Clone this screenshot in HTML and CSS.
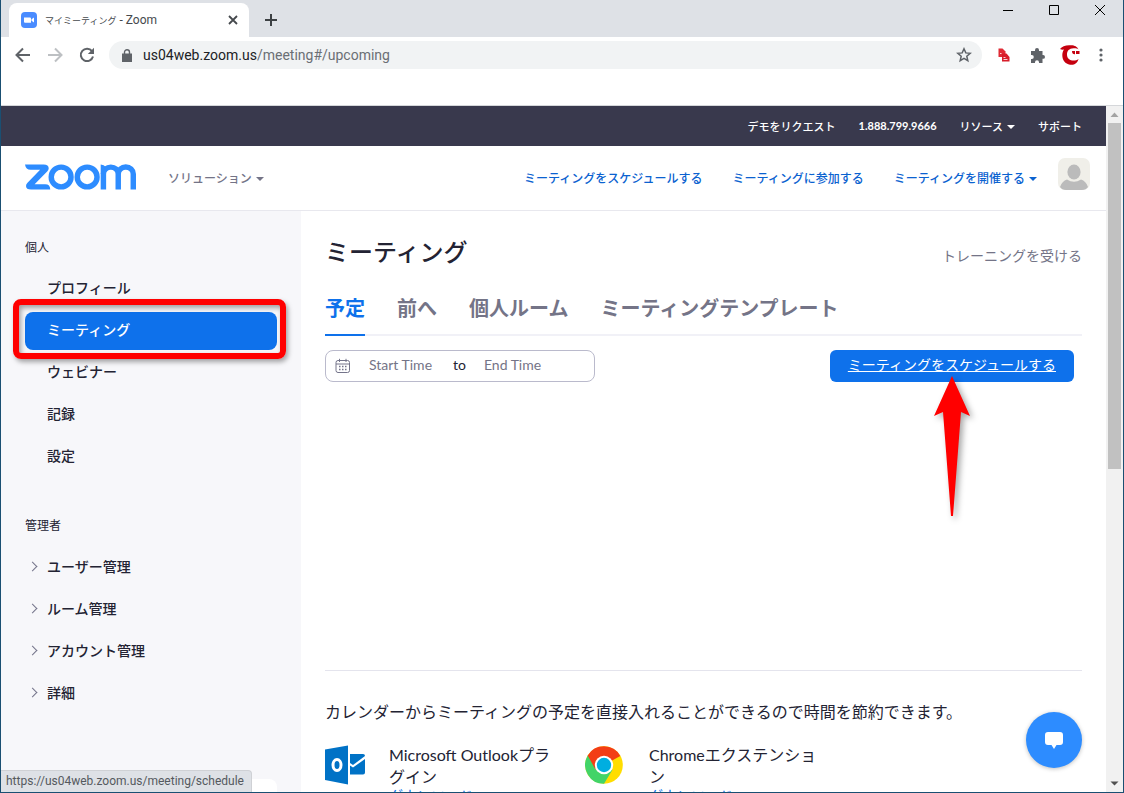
FILE: index.html
```html
<!DOCTYPE html>
<html lang="ja">
<head>
<meta charset="utf-8">
<title>マイミーティング - Zoom</title>
<link rel="stylesheet" href="styles.css">
</head>
<body>
<div class="window">
  <div class="tabstrip">
    <div class="tab">
      <svg class="favicon" viewBox="0 0 16 16"><rect width="16" height="16" rx="4" fill="#4a8cff"/><path d="M3 5.500h6q1 0 1 1v4.300H4q-1 0-1-1zM10.500 7.300 13 5.500v5l-2.500-1.800z" fill="#fff"/></svg>
      <span class="tab-title"><span class="tab-ja">マイミーティング</span> - Zoom</span>
      <button class="icon-btn" aria-label="タブを閉じる"><svg width="10" height="10" viewBox="0 0 10 10"><path d="M1 1l8 8M9 1L1 9" stroke="#45494d" stroke-width="1.800"/></svg></button>
    </div>
    <button class="icon-btn new-tab" aria-label="新しいタブ"><svg width="12" height="12" viewBox="0 0 12 12"><path d="M6 0v12M0 6h12" stroke="#3c4043" stroke-width="2"/></svg></button>
    <div class="window-controls">
      <button class="icon-btn" aria-label="最小化"><svg width="10" height="10" viewBox="0 0 10 10"><path d="M0 5.500h10" stroke="#000"/></svg></button>
      <button class="icon-btn" aria-label="最大化"><svg width="10" height="10" viewBox="0 0 10 10"><path d="M.5.5h9v9h-9z" fill="none" stroke="#000"/></svg></button>
      <button class="icon-btn" aria-label="閉じる"><svg width="10" height="10" viewBox="0 0 10 10"><path d="M0 0l10 10M10 0L0 10" stroke="#000"/></svg></button>
    </div>
  </div>
  <div class="toolbar">
    <button class="icon-btn" aria-label="戻る"><svg width="16" height="16" viewBox="0 0 16 16"><path d="M15 8H2M8 1.500 1.500 8 8 14.500" fill="none" stroke="#5f6368" stroke-width="2"/></svg></button>
    <button class="icon-btn" aria-label="進む"><svg width="16" height="16" viewBox="0 0 16 16"><path d="M1 8h13M8 1.500 14.500 8 8 14.500" fill="none" stroke="#bdc0c3" stroke-width="2"/></svg></button>
    <button class="icon-btn" aria-label="再読み込み"><svg width="16" height="16" viewBox="0 0 16 16"><path d="M13 4.200A6.200 6.200 0 1 0 14 9.500" fill="none" stroke="#5f6368" stroke-width="2"/><path d="M15 .8v6.200H8.800z" fill="#5f6368"/></svg></button>
    <div class="address">
      <svg width="10" height="13" viewBox="0 0 10 13"><path d="M0 4.500h10V13H0z" fill="#5f6368"/><path d="M2.500 5V3.200a2.500 2.500 0 0 1 5 0V5" fill="none" stroke="#5f6368" stroke-width="1.400"/></svg>
      <span class="url">us04web.zoom.us<span class="url-path">/meeting#/upcoming</span></span>
      <button class="icon-btn" aria-label="ブックマーク"><svg width="16" height="16" viewBox="0 0 16 16"><path d="M8 1.800l1.800 4.100 4.400.4-3.400 2.900 1 4.400L8 11.300l-3.800 2.300 1-4.400-3.400-2.900 4.400-.4z" fill="none" stroke="#5f6368" stroke-width="1.500"/></svg></button>
    </div>
    <div class="extensions">
      <button class="icon-btn" aria-label="コピー"><svg width="12" height="14" viewBox="0 0 12 14"><path d="M.5.5h4l3 3V9h-7z" fill="#e02b35"/><path d="M4 5.500h4.500L11.500 9v4.500H4z" fill="#d81e2b"/><path d="M2 5.500h1.500M5.500 9.500h2M5.500 11.500h4" stroke="#fff" stroke-width=".8"/></svg></button>
      <button class="icon-btn" aria-label="拡張機能"><svg width="15" height="15" viewBox="0 0 15 15"><path d="M1 3h4V2a2 2 0 0 1 4 0v1h3.500v4h.6a1.900 1.900 0 0 1 0 3.800h-.6V15H9v-.8a2 2 0 0 0-4 0v.8H1v-4h.8a2 2 0 0 0 0-4H1z" fill="#5f6368"/></svg></button>
      <button class="icon-btn" aria-label="プロフィール"><svg width="20" height="20" viewBox="0 0 20 20"><path d="M0 4C2 1 6-.2 11 .2c4 .2 6 1.200 7.500 4.300-1.500-1.200-3-1.300-5-1.200C9 3.500 7 6 7 9.500c0 4 3 6 6.500 6 2 0 3.500-.5 5-1.500-1 4-4.500 6.500-8.500 5.700C4.500 18.700 1.500 14 2.500 8c.3-1.500.8-2.500 1.500-3.500Q2 5 0 4z" fill="#c5000f"/><path d="M12 6h3v3.200c-1.800.2-3-.6-3-3.200zM16 6h3.500v3H16z" fill="#c5000f"/></svg></button>
      <button class="icon-btn menu-btn" aria-label="メニュー"><svg width="4" height="14" viewBox="0 0 4 14" fill="#5f6368"><circle cx="2" cy="2" r="1.600"/><circle cx="2" cy="7" r="1.600"/><circle cx="2" cy="12" r="1.600"/></svg></button>
    </div>
  </div>

  <div class="viewport">
    <div class="page">
      <nav class="topbar">
        <a href="#">デモをリクエスト</a>
        <a class="phone" href="#">1.888.799.9666</a>
        <a class="has-caret" href="#">リソース</a>
        <a href="#">サポート</a>
      </nav>
      <header class="header">
        <a class="logo" href="#" aria-label="zoom">
          <svg width="111" height="26" viewBox="0 0 110 25"><path d="M0 0h18.500q5 0 5 3.800 0 1.700-1.300 3L9.500 19.800H20q5 0 5 5.200H6q-5 0-5-3.500 0-1.900 1.500-3.300L15 5.300H5.500Q.8 5.300 0 0z" fill="#2d8cff"/><g fill="none" stroke="#2d8cff" stroke-width="5.400"><circle cx="35.800" cy="12.500" r="9.800"/><circle cx="61.600" cy="12.500" r="9.800"/><path d="M77.700 25V9.500a7.350 6.800 0 0 1 14.700 0V25M92.400 9.500a7.350 6.800 0 0 1 14.900 0V25"/></g><path d="M75 0q3.500 0 5 2.500l-3 7h-2z" fill="#2d8cff"/></svg>
        </a>
        <a class="solutions has-caret" href="#">ソリューション</a>
        <nav class="header-links">
          <a href="#">ミーティングをスケジュールする</a>
          <a href="#">ミーティングに参加する</a>
          <a class="has-caret" href="#">ミーティングを開催する</a>
        </nav>
        <svg class="avatar" viewBox="0 0 32 32"><rect width="32" height="32" rx="7" fill="#f0efe9"/><ellipse cx="16" cy="14" rx="6.600" ry="7.500" fill="#bbb"/><path d="M2 29q2-6 7-7.500 7 4.500 14 0 5 1.500 7 7.500-2 3-6 3H8q-4 0-6-3z" fill="#bbb"/></svg>
      </header>
      <div class="body">
        <aside class="sidebar">
          <h2 class="side-label">個人</h2>
          <ul class="side-list">
            <li><a href="#">プロフィール</a></li>
            <li class="highlighted"><a class="active" href="#">ミーティング</a></li>
            <li><a href="#">ウェビナー</a></li>
            <li><a href="#">記録</a></li>
            <li><a href="#">設定</a></li>
          </ul>
          <h2 class="side-label">管理者</h2>
          <ul class="side-list expandable">
            <li><a href="#">ユーザー管理</a></li>
            <li><a href="#">ルーム管理</a></li>
            <li><a href="#">アカウント管理</a></li>
            <li><a href="#">詳細</a></li>
          </ul>
          <div class="side-card"></div>
        </aside>
        <main class="main">
          <div class="title-row">
            <h1>ミーティング</h1>
            <a class="training" href="#">トレーニングを受ける</a>
          </div>
          <nav class="tabs">
            <a class="current" href="#">予定</a>
            <a href="#">前へ</a>
            <a href="#">個人ルーム</a>
            <a href="#">ミーティングテンプレート</a>
          </nav>
          <div class="actions">
            <div class="range">
              <svg width="16" height="16" viewBox="0 0 16 16"><g fill="none" stroke="#74748a"><rect x="1" y="2.500" width="13.500" height="12" rx="2"/><path d="M1 6h13.500M4.500.8V4M11 .8V4"/></g><path d="M4 8.500h1.500M7 8.500h1.500M10 8.500h1.500M4 11.500h1.500M7 11.500h1.500M10 11.500h1.500" stroke="#74748a" stroke-width="1.500"/></svg>
              <input type="text" placeholder="Start Time" aria-label="Start Time">
              <span>to</span>
              <input type="text" placeholder="End Time" aria-label="End Time">
            </div>
            <a class="schedule" href="#">ミーティングをスケジュールする
              <svg class="pointer" width="38" height="142" viewBox="0 0 38 142"><path d="M19 1 37 41l-9-4-8 104h-2L10 37l-9 4z" fill="#f00"/></svg>
            </a>
          </div>
          <section class="plugins">
            <p class="lead">カレンダーからミーティングの予定を直接入れることができるので時間を節約できます。</p>
            <div class="plugin-list">
              <div class="plugin">
                <svg class="plugin-icon" viewBox="0 0 40 40"><path d="M0 4.500 23 .5v39L0 35z" fill="#0072c6"/><path d="M25 9h13q2 0 2 2l-12 9-3-2z" fill="#0072c6"/><path d="M25 20.500l3 2 12-8.500v13.500q0 2-2 2H25z" fill="#0072c6"/><ellipse cx="12" cy="20" rx="4" ry="5.500" fill="none" stroke="#fff" stroke-width="3"/></svg>
                <div class="plugin-text">Microsoft Outlookプラグイン<a href="#">ダウンロード</a></div>
              </div>
              <div class="plugin">
                <svg class="plugin-icon" viewBox="0 0 40 40"><circle cx="19" cy="20" r="18.800" fill="#ffdd00"/><path d="M19 20 2.700 10.600A18.800 18.800 0 0 0 19 38.800l8.500-14z" fill="#42d468"/><path d="M19 20 10.500 24.500 2.700 10.600A18.800 18.800 0 0 1 35.300 11z" fill="#f33d16"/><circle cx="19" cy="20" r="9.200" fill="#fff"/><circle cx="19" cy="20" r="7.200" fill="#00aee0"/></svg>
                <div class="plugin-text">Chromeエクステンション<a href="#">ダウンロード</a></div>
              </div>
            </div>
          </section>
        </main>
      </div>
      <button class="chat" aria-label="チャット"><svg width="20" height="20" viewBox="0 0 20 20"><path d="M4 2h12q3 0 3 3v7q0 3-3 3h-3.500L10 19l-2.500-4H4q-3 0-3-3V5q0-3 3-3z" fill="#fff"/></svg></button>
      <div class="status">https://us04web.zoom.us/meeting/schedule</div>
    </div>
    <div class="scrollbar">
      <svg viewBox="0 0 17 17"><path d="M4.500 11h8l-4-4.500z" fill="#a3a3a3"/></svg>
      <div class="track"><div class="thumb"></div></div>
      <svg viewBox="0 0 17 17"><path d="M4.500 6.500h8l-4 4z" fill="#505050"/></svg>
    </div>
  </div>
</div>
</body>
</html>
```
FILE: styles.css
```css
* { box-sizing: border-box; }
body {
  margin: 0;
  font-family: Lato, "Noto Sans CJK JP", sans-serif;
  color: #232333;
}
a { color: inherit; text-decoration: none; }
svg { display: block; flex: none; }
ul { list-style: none; margin: 0; padding: 0; }
h1, h2, p { margin: 0; }

.window {
  display: flex;
  flex-direction: column;
  height: 100vh;
  overflow: hidden;
  background: #fff;
  border: 1px solid #1a4f72;
  border-top: 0;
}
.icon-btn {
  display: flex;
  align-items: center;
  justify-content: center;
  padding: 0;
  border: 0;
  background: none;
}

/* browser frame */
.tabstrip {
  display: flex;
  flex: none;
  height: 37px;
  padding-left: 8px;
  background: #dee1e6;
  font: 12px Roboto, "Noto Sans CJK JP", sans-serif;
}
.tab {
  display: flex;
  align-items: center;
  width: 240px;
  height: 34px;
  margin-top: 3px;
  padding: 0 11px 0 12px;
  border-radius: 8px 8px 0 0;
  background: #fff;
  box-shadow: 0 3px #fff;
}
.favicon { width: 16px; height: 16px; }
.tab-title {
  flex: 1;
  margin-left: 8px;
  color: #45494d;
  white-space: nowrap;
}
.tab-ja { font-size: 9px; }
.new-tab { width: 44px; height: 40px; }
.window-controls {
  display: flex;
  margin-left: auto;
  height: 19px;
}
.window-controls .icon-btn { width: 46px; }

.toolbar {
  display: flex;
  align-items: center;
  flex: none;
  height: 69px;
  padding: 0 14px 32px;
  gap: 16px;
  border-bottom: 1px solid #d5d7da;
}
.address {
  display: flex;
  align-items: center;
  flex: 1;
  height: 28px;
  padding: 0 10px 0 13px;
  margin: 0 -4px 0 -2px;
  border-radius: 14px;
  background: #f1f3f4;
  font: 14px Roboto, sans-serif;
}
.url { flex: 1; margin-left: 11px; color: #202124; }
.url-path { color: #6b6f74; }
.extensions { display: flex; align-items: center; gap: 13px; }
.extensions .icon-btn { width: 20px; }
.extensions .menu-btn { width: 16px; }

/* web page */
.viewport { display: flex; flex: 1; min-height: 0; }
.page {
  position: relative;
  display: flex;
  flex-direction: column;
  flex: 1;
  min-width: 0;
  overflow: hidden;
}
.has-caret { display: flex; align-items: center; gap: 4px; }
.has-caret::after {
  content: "";
  margin-top: 3px;
  border: 4px solid transparent;
  border-top-color: currentColor;
  border-bottom: 0;
}
.topbar {
  display: flex;
  align-items: center;
  justify-content: flex-end;
  flex: none;
  height: 40px;
  padding: 0 24px 1px;
  gap: 23px;
  background: #39394d;
  color: #fff;
  font-size: 11px;
  font-weight: 500;
}
.phone { font-weight: 700; }
.header {
  display: flex;
  align-items: center;
  flex: none;
  height: 65px;
  padding: 0 16px 2px 24px;
  border-bottom: 1px solid #e8e8ee;
  font-size: 12px;
  font-weight: 500;
}
.solutions { margin-left: 32px; color: #747487; }
.header-links {
  display: flex;
  gap: 30px;
  margin-left: auto;
  color: #0b62d0;
}
.avatar { width: 32px; height: 32px; margin: 0 0 6px 21px; }

.body { display: flex; flex: 1; min-height: 0; }
.sidebar {
  display: flex;
  flex-direction: column;
  flex: none;
  width: 300px;
  padding: 28px 24px 0;
  background: #f7f7fa;
}
.side-label {
  margin-bottom: 13px;
  font-size: 12px;
  font-weight: 400;
  line-height: 18px;
}
.side-list {
  display: flex;
  flex-direction: column;
  gap: 4px;
  margin-bottom: 41px;
}
.side-list li { position: relative; }
.side-list a {
  display: block;
  height: 38px;
  padding-left: 22px;
  border-radius: 8px;
  font-size: 14px;
  font-weight: 500;
  line-height: 35px;
}
.side-list .active { background: #0e71eb; color: #fff; }
.highlighted::after {
  content: "";
  position: absolute;
  inset: -13px -9px -9px -12px;
  border: 6px solid #f00;
  border-radius: 8px;
  box-shadow: 2px 3px 5px rgba(0, 0, 0, .35), inset 2px 3px 5px rgba(0, 0, 0, .35);
}
.expandable a { display: flex; align-items: center; padding: 0 0 2px 4px; }
.expandable a::before {
  content: "";
  width: 6px;
  height: 6px;
  margin-right: 11px;
  border: solid #74748a;
  border-width: 1px 1px 0 0;
  transform: rotate(45deg);
}
.side-card {
  flex: none;
  height: 40px;
  margin-top: 26px;
  border-radius: 8px;
  background: #fff;
}

.main {
  display: flex;
  flex-direction: column;
  flex: 1;
  min-width: 0;
  padding: 23px 24px 0;
}
.title-row {
  display: flex;
  align-items: center;
  justify-content: space-between;
}
h1 { font-size: 24px; font-weight: 500; line-height: 36px; }
.training { padding-top: 6px; color: #747487; font-size: 14px; }
.tabs {
  display: flex;
  gap: 32px;
  margin-top: 23px;
  box-shadow: inset 0 -2px #f1f1f7;
  color: #747487;
  font-size: 20px;
  font-weight: 700;
  line-height: 30px;
}
.tabs a { padding-bottom: 11px; border-bottom: 2px solid transparent; }
.tabs .current { color: #0e71eb; border-color: #0e71eb; }
.actions {
  display: flex;
  justify-content: space-between;
  margin-top: 14px;
  padding-right: 8px;
}
.range {
  display: flex;
  align-items: center;
  gap: 18px;
  width: 270px;
  height: 32px;
  padding-left: 9px;
  border: 1px solid #babacc;
  border-radius: 8px;
  font-size: 14px;
}
.range input, .range span { padding: 0 0 3px; }
.range input {
  width: 66px;
  border: 0;
  background: none;
  font: inherit;
}
.range input::placeholder { color: #747487; }
.schedule {
  position: relative;
  padding: 0 18px;
  border-radius: 6px;
  background: #0e71eb;
  color: #fff;
  font-size: 14px;
  line-height: 30px;
  text-decoration: underline;
}
.pointer {
  position: absolute;
  top: 25px;
  left: 50%;
  margin-left: -19px;
  filter: drop-shadow(3px 3px 3px rgba(0, 0, 0, .35));
}
.plugins {
  margin-top: 288px;
  padding-top: 29px;
  border-top: 1px solid #e4e4ed;
}
.lead { font-size: 16px; line-height: 24px; }
.plugin-list { display: flex; gap: 24px; margin-top: 20px; }
.plugin { display: flex; gap: 24px; width: 236px; }
.plugin-icon { width: 40px; height: 40px; margin-top: 1px; }
.plugin-text { flex: 1; font-size: 16px; line-height: 22px; }
.plugin-text a { display: block; color: #0e71eb; font-size: 14px; line-height: 16px; }

.chat {
  position: absolute;
  right: 24px;
  bottom: 24px;
  display: flex;
  align-items: center;
  justify-content: center;
  width: 56px;
  height: 56px;
  border: 0;
  border-radius: 50%;
  background: #2d8cff;
  box-shadow: 0 1px 4px rgba(0, 0, 0, .25);
}
.status {
  position: absolute;
  left: 0;
  bottom: 0;
  padding: 0 7px 0 5px;
  border: 1px solid #cfd1d5;
  border-width: 1px 1px 0 0;
  border-radius: 0 4px 0 0;
  background: #dee1e6;
  color: #55595e;
  font: 12px/21px Roboto, sans-serif;
}

.scrollbar {
  display: flex;
  flex-direction: column;
  flex: none;
  width: 17px;
  background: #f1f1f1;
}
.track { flex: 1; padding: 0 2px; }
.thumb { height: 53%; background: #c1c1c1; }
```
